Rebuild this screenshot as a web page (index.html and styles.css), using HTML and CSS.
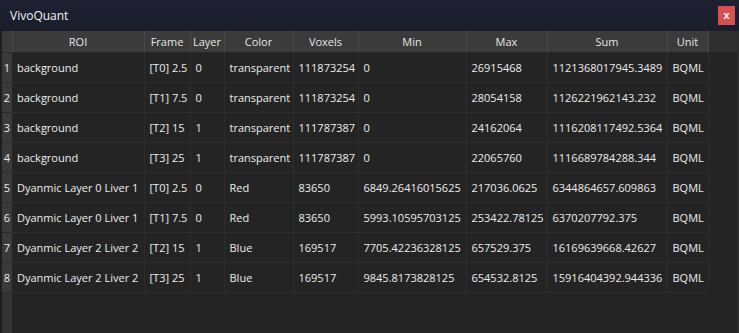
FILE: index.html
```html
<!DOCTYPE html>
<html lang="en">
<head>
    <meta charset="UTF-8">
    <meta name="viewport" content="width=device-width, initial-scale=1.0">
    <title>VivoQuant</title>
    <link rel="stylesheet" href="styles.css">
</head>
<body>
    <div class="window">
        <div class="titlebar">
            <span class="title">VivoQuant</span>
            <button class="btn-close">x</button>
        </div>
        <div class="content">
            <table class="grid">
                <colgroup>
                    <col class="c-num">
                    <col class="c-roi">
                    <col class="c-frame">
                    <col class="c-layer">
                    <col class="c-color">
                    <col class="c-voxels">
                    <col class="c-min">
                    <col class="c-max">
                    <col class="c-sum">
                    <col class="c-unit">
                </colgroup>
                <thead>
                    <tr>
                        <th></th>
                        <th>ROI</th>
                        <th>Frame</th>
                        <th>Layer</th>
                        <th>Color</th>
                        <th>Voxels</th>
                        <th>Min</th>
                        <th>Max</th>
                        <th>Sum</th>
                        <th>Unit</th>
                    </tr>
                </thead>
                <tbody>
                    <tr><td class="num">1</td><td>background</td><td>[T0] 2.5</td><td>0</td><td>transparent</td><td>111873254</td><td>0</td><td>26915468</td><td>1121368017945.3489</td><td>BQML</td></tr>
                    <tr><td class="num">2</td><td>background</td><td>[T1] 7.5</td><td>0</td><td>transparent</td><td>111873254</td><td>0</td><td>28054158</td><td>1126221962143.232</td><td>BQML</td></tr>
                    <tr><td class="num">3</td><td>background</td><td>[T2] 15</td><td>1</td><td>transparent</td><td>111787387</td><td>0</td><td>24162064</td><td>1116208117492.5364</td><td>BQML</td></tr>
                    <tr><td class="num">4</td><td>background</td><td>[T3] 25</td><td>1</td><td>transparent</td><td>111787387</td><td>0</td><td>22065760</td><td>1116689784288.344</td><td>BQML</td></tr>
                    <tr><td class="num">5</td><td>Dyanmic Layer 0 Liver 1</td><td>[T0] 2.5</td><td>0</td><td>Red</td><td>83650</td><td>6849.26416015625</td><td>217036.0625</td><td>6344864657.609863</td><td>BQML</td></tr>
                    <tr><td class="num">6</td><td>Dyanmic Layer 0 Liver 1</td><td>[T1] 7.5</td><td>0</td><td>Red</td><td>83650</td><td>5993.10595703125</td><td>253422.78125</td><td>6370207792.375</td><td>BQML</td></tr>
                    <tr><td class="num">7</td><td>Dyanmic Layer 2 Liver 2</td><td>[T2] 15</td><td>1</td><td>Blue</td><td>169517</td><td>7705.42236328125</td><td>657529.375</td><td>16169639668.42627</td><td>BQML</td></tr>
                    <tr><td class="num">8</td><td>Dyanmic Layer 2 Liver 2</td><td>[T3] 25</td><td>1</td><td>Blue</td><td>169517</td><td>9845.8173828125</td><td>654532.8125</td><td>15916404392.944336</td><td>BQML</td></tr>
                </tbody>
            </table>
        </div>
    </div>
</body>
</html>
```

FILE: styles.css
```css
*{
    padding: 0;
    margin: 0;
    box-sizing: border-box;
}
body{
    width: 739px;
    height: 333px;
    overflow: hidden;
    font-family: 'Open Sans', 'Noto Sans', sans-serif;
    background: #1c1f2b;
    color: #ececec;
}
.window{
    height: 100%;
    display: flex;
    flex-direction: column;
}
.titlebar{
    height: 31px;
    display: flex;
    align-items: center;
    justify-content: space-between;
    padding: 0 4px 0 10px;
    background: linear-gradient(#1f2133, #1a1d29);
}
.title{
    font-size: 12px;
    color: #f2f2f2;
}
.btn-close{
    width: 17px;
    height: 19px;
    border: none;
    outline: none;
    background: #d6504f;
    color: white;
    font-family: 'Liberation Sans', sans-serif;
    font-size: 11px;
    font-weight: bold;
    line-height: 17px;
}
.content{
    flex: 1;
    background: #242424;
    border-left: 2px solid #1e1e1e;
    border-right: 2px solid #2d2d2d;
    overflow: hidden;
    position: relative;
}
.content::before{
    content: "";
    position: absolute;
    left: 0;
    top: 0;
    bottom: 0;
    width: 10px;
    background: #333333;
}
.content::after{
    content: "";
    position: absolute;
    left: 0;
    right: 0;
    top: 0;
    height: 21px;
    background: #2f2f2f;
}
.grid{
    position: relative;
    z-index: 1;
    border-collapse: collapse;
    table-layout: fixed;
    width: 706px;
    font-size: 11px;
}
.c-num{ width: 10px; }
.c-roi{ width: 132px; }
.c-frame{ width: 46px; }
.c-layer{ width: 34px; }
.c-color{ width: 69px; }
.c-voxels{ width: 65px; }
.c-min{ width: 108px; }
.c-max{ width: 81px; }
.c-sum{ width: 120px; }
.c-unit{ width: 41px; }
.grid th{
    height: 21px;
    font-weight: normal;
    text-align: center;
    background: #3b3b3b;
    color: #e6e6e6;
    border-right: 1px solid #4a4a4a;
    border-bottom: 1px solid #2a2a2a;
    white-space: nowrap;
}
.grid td{
    height: 30px;
    padding: 0 0 0 5px;
    white-space: nowrap;
    overflow: hidden;
    border-right: 1px solid #2d2d2d;
    border-bottom: 1px solid #2d2d2d;
}
.grid td.num{
    padding: 0;
    text-align: center;
    background: #3a3a3a;
    border-bottom: 1px solid #2b2b2b;
    border-right: none;
}
```
